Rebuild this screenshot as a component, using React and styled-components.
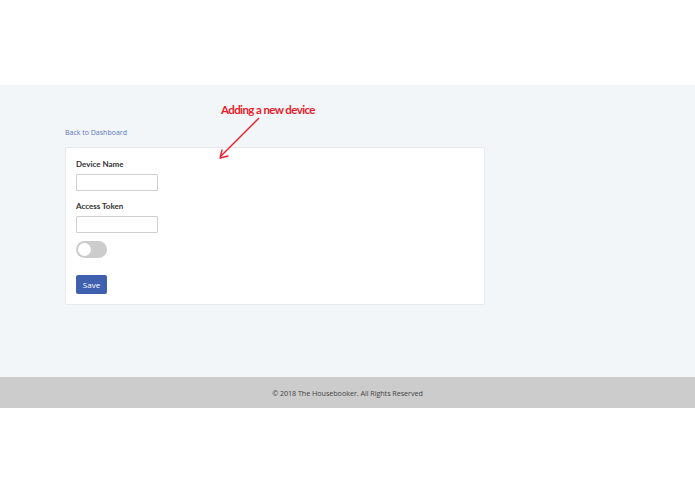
import styled, { createGlobalStyle } from 'styled-components';

const GlobalStyle = createGlobalStyle`
  html, body {
    margin: 0;
    padding: 0;
    background: #ffffff;
    font-family: "Open Sans", "Liberation Sans", sans-serif;
  }
`;

const Page = styled.div`
  width: 695px;
  height: 494px;
  display: flex;
  flex-direction: column;
`;

const TopBar = styled.div`
  height: 85px;
  background: #ffffff;
`;

const Main = styled.main`
  position: relative;
  height: 292px;
  background: #f3f6f9;
  padding: 43px 0 0 65px;
  box-sizing: border-box;
`;

const BackLink = styled.a`
  display: block;
  font-size: 7px;
  line-height: 10px;
  color: #5a77b8;
  text-decoration: none;
  margin-bottom: 9px;
`;

const Card = styled.div`
  width: 420px;
  height: 158px;
  box-sizing: border-box;
  background: #ffffff;
  border: 1px solid #e6e9ed;
  border-radius: 2px;
  padding: 11px 10px 10px;
  display: flex;
  flex-direction: column;
  align-items: flex-start;
`;

const Label = styled.label`
  font-family: Lato, "Liberation Sans", sans-serif;
  font-weight: 700;
  font-size: 8px;
  line-height: 10px;
  color: #333333;
  margin-top: ${p => p.$gap || 0}px;
  margin-bottom: 5px;
`;

const Input = styled.input`
  width: 82px;
  height: 17px;
  box-sizing: border-box;
  border: 1px solid #cfcfcf;
  border-radius: 1px;
  padding: 0 4px;
  font-size: 8px;
  outline: none;
`;

const Toggle = styled.div`
  margin-top: 8px;
  width: 31px;
  height: 17px;
  border-radius: 9px;
  background: #cccccc;
  position: relative;
  &::after {
    content: '';
    position: absolute;
    left: 2px;
    top: 2px;
    width: 13px;
    height: 13px;
    border-radius: 50%;
    background: #ffffff;
  }
`;

const SaveButton = styled.button`
  margin-top: 17px;
  width: 31px;
  height: 19px;
  border: none;
  border-radius: 2px;
  background: #3f60ae;
  color: #ffffff;
  font-family: "Open Sans", "Liberation Sans", sans-serif;
  font-size: 8px;
  padding: 0;
`;

const Annotation = styled.div`
  position: absolute;
  left: 150px;
  top: 13px;
  width: 180px;
  height: 80px;
  pointer-events: none;
`;

const AnnotationText = styled.span`
  position: absolute;
  left: 71px;
  top: 5px;
  font-family: Lato, "Open Sans", sans-serif;
  font-size: 11.5px;
  font-weight: 700;
  letter-spacing: -0.6px;
  line-height: 14px;
  color: #e8202a;
  white-space: nowrap;
`;

const Arrow = styled.svg`
  position: absolute;
  left: 0;
  top: 0;
`;

const Footer = styled.footer`
  height: 31px;
  background: #cccccc;
  display: flex;
  align-items: center;
  justify-content: center;
  font-size: 7.2px;
  letter-spacing: -0.05px;
  color: #444444;
`;

export default function App() {
  return (
    <>
      <GlobalStyle />
      <Page>
        <TopBar />
        <Main>
          <BackLink href="#">Back to Dashboard</BackLink>
          <Card>
            <Label>Device Name</Label>
            <Input type="text" />
            <Label $gap={10}>Access Token</Label>
            <Input type="text" />
            <Toggle />
            <SaveButton>Save</SaveButton>
          </Card>
          <Annotation>
            <AnnotationText>Adding a new device</AnnotationText>
            <Arrow width="180" height="80" viewBox="0 0 180 80">
              <line x1="109" y1="20" x2="71" y2="58" stroke="#e8202a" strokeWidth="1.4" />
              <path d="M70 60 L72 52 M70 60 L78 58" stroke="#e8202a" strokeWidth="1.4" fill="none" strokeLinecap="round" />
            </Arrow>
          </Annotation>
        </Main>
        <Footer>© 2018 The Housebooker. All Rights Reserved</Footer>
      </Page>
    </>
  );
}
